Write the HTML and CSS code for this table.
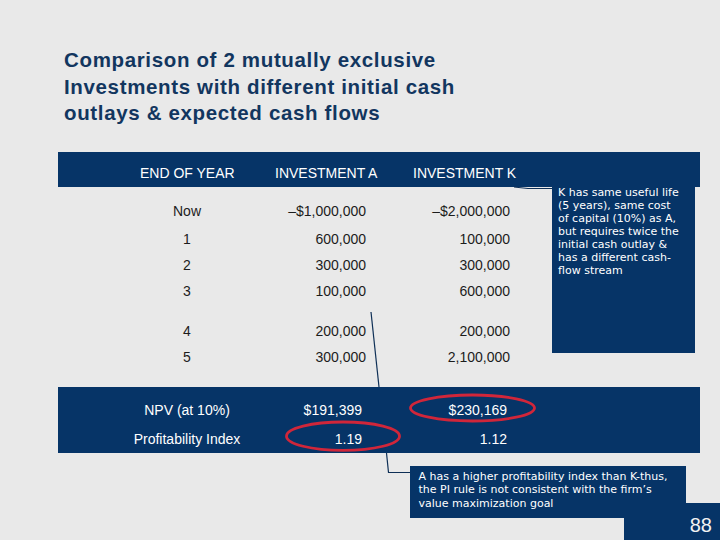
FILE: index.html
```html
<!DOCTYPE html>
<html lang="en">
<head>
<meta charset="utf-8">
<title>Comparison of 2 mutually exclusive investments</title>
<link rel="stylesheet" href="styles.css">
</head>
<body>
<div class="slide">
  <h1 class="title">Comparison of 2 mutually exclusive<br>Investments with different initial cash<br>outlays &amp; expected cash flows</h1>

  <div class="table">
    <div class="head">
      <span>END OF YEAR</span>
      <span>INVESTMENT A</span>
      <span>INVESTMENT K</span>
    </div>
    <div class="body">
      <div class="row row--first"><span class="yr">Now</span><span class="num">–$1,000,000</span><span class="num">–$2,000,000</span></div>
      <div class="row"><span class="yr">1</span><span class="num">600,000</span><span class="num">100,000</span></div>
      <div class="row"><span class="yr">2</span><span class="num">300,000</span><span class="num">300,000</span></div>
      <div class="row row--gap"><span class="yr">3</span><span class="num">100,000</span><span class="num">600,000</span></div>
      <div class="row"><span class="yr">4</span><span class="num">200,000</span><span class="num">200,000</span></div>
      <div class="row row--last"><span class="yr">5</span><span class="num">300,000</span><span class="num">2,100,000</span></div>
    </div>
    <div class="foot">
      <div class="row row--npv"><span class="yr">NPV (at 10%)</span><span class="num num--a">$191,399</span><span class="num num--k">$230,169</span></div>
      <div class="row row--last"><span class="yr">Profitability Index</span><span class="num num--a">1.19</span><span class="num num--k">1.12</span></div>
    </div>
  </div>

  <div class="note note--k">K has same useful life<br>(5 years), same cost<br>of capital (10%) as A,<br>but requires twice the<br>initial cash outlay &amp;<br>has a different cash-<br>flow stream</div>

  <div class="note note--pi">A has a higher profitability index than K-thus,<br>the PI rule is not consistent with the firm’s<br>value maximization goal</div>

  <div class="page-num">88</div>

  <svg class="marks" width="720" height="540" viewBox="0 0 720 540" aria-hidden="true">
    <polyline points="514,187 528,188.5 552,188.5" fill="none" stroke="#0e2f56" stroke-width="1.2"/>
    <line x1="371" y1="312" x2="379" y2="387" stroke="#0e2f56" stroke-width="1.2"/>
    <polyline points="386.5,453 388.5,472.5 410,472.5" fill="none" stroke="#0e2f56" stroke-width="1.2"/>
    <ellipse cx="472.5" cy="408" rx="62" ry="13" fill="none" stroke="#d0263a" stroke-width="2.8"/>
    <ellipse cx="343" cy="436.2" rx="56.5" ry="14.2" fill="none" stroke="#d0263a" stroke-width="2.8"/>
  </svg>
</div>
</body>
</html>
```
FILE: styles.css
```css
* { box-sizing: border-box; }

html, body {
  margin: 0;
  padding: 0;
  background: #e9e9e9;
}

.slide {
  position: relative;
  width: 720px;
  height: 540px;
  overflow: hidden;
  background: #e9e9e9;
  font-family: "Liberation Sans", Arial, sans-serif;
}

.title {
  margin: 0;
  padding: 47px 0 0 64px;
  font-size: 20.5px;
  line-height: 26.5px;
  font-weight: bold;
  letter-spacing: 0.65px;
  color: #12365f;
}

.table {
  margin: 25.5px 20px 0 58px;
  font-size: 14px;
  line-height: 16px;
}

.head {
  height: 35px;
  padding: 13px 0 0 82px;
  display: grid;
  grid-template-columns: 135px 138px auto;
  background: #063467;
  color: #ffffff;
}

.body {
  padding-top: 16px;
  color: #1c1c1c;
}

.row {
  display: grid;
  grid-template-columns: 140px 109px 144px;
  padding-left: 59px;
  height: 26px;
}

.row--first { height: 28px; }
.row--gap { height: 40px; }
.row--last { height: 16px; }
.row--npv { height: 29px; }

.yr {
  text-align: center;
  white-space: nowrap;
}

.num {
  text-align: right;
  white-space: nowrap;
}

.foot {
  margin-top: 22px;
  padding: 15px 0 6px;
  background: #063467;
  color: #ffffff;
}

.num--a { padding-right: 4px; }
.num--k { padding-right: 3px; }

.note {
  position: absolute;
  background: #063467;
  color: #ffffff;
  font-family: "DejaVu Sans", Verdana, sans-serif;
  font-size: 11px;
  white-space: nowrap;
}

.note--k {
  left: 552px;
  top: 185px;
  width: 143px;
  height: 168px;
  padding: 1px 0 0 6px;
  line-height: 13px;
}

.note--pi {
  left: 410px;
  top: 466px;
  width: 276px;
  height: 52px;
  padding: 3.5px 0 0 8.5px;
  line-height: 13.7px;
}

.page-num {
  position: absolute;
  left: 624px;
  top: 503px;
  width: 96px;
  height: 37px;
  padding: 12px 8px 0 0;
  background: #063467;
  color: #f2f2f2;
  text-align: right;
  font-family: "Liberation Sans", Arial, sans-serif;
  font-size: 20px;
  line-height: 20px;
}

.marks {
  position: absolute;
  left: 0;
  top: 0;
  pointer-events: none;
}
```
